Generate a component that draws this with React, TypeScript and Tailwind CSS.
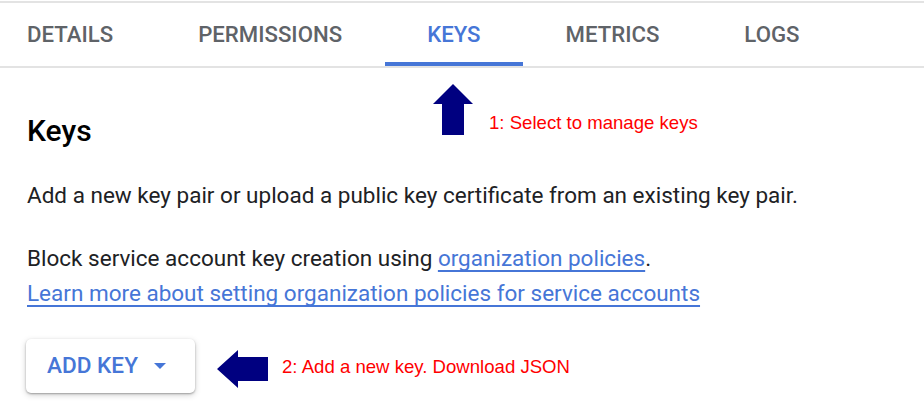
const TABS = ["DETAILS", "PERMISSIONS", "KEYS", "METRICS", "LOGS"];

function Tabs({ active }: { active: string }) {
  return (
    <div className="pt-px">
      <div className="border-t-2 border-b-2 border-[#e3e3e3] overflow-hidden">
        <div className="flex -ml-[15.5px]">
          {TABS.map((t) => (
            <div
              key={t}
              className={
                "px-[42.5px] pt-[18px] pb-[14px] border-b-4 text-[22.2px] leading-[27px] font-medium whitespace-nowrap " +
                (t === active ? "border-[#4676d7] text-[#4676d7]" : "border-transparent text-[#5f6368]")
              }
            >
              {t}
            </div>
          ))}
        </div>
      </div>
    </div>
  );
}

function UpArrow() {
  return (
    <svg width="40" height="51" viewBox="0 0 40 51">
      <path d="M20 0 L40 20 L31 20 L31 51 L9 51 L9 20 L0 20 Z" fill="#000080" />
    </svg>
  );
}

function LeftArrow() {
  return (
    <svg width="51" height="38" viewBox="0 0 51 38">
      <path d="M0 19 L21 0 L21 7 L51 7 L51 31 L21 31 L21 38 Z" fill="#000080" />
    </svg>
  );
}

const note = "text-[18.6px] leading-[18px] text-[#ff0000] font-['Liberation_Sans',Arial,sans-serif] whitespace-nowrap";
const link = "text-[#4676d7] underline decoration-2 underline-offset-[4px] [text-decoration-skip-ink:none]";

export default function App() {
  return (
    <div className="w-[924px] h-[415px] bg-white overflow-hidden font-['Roboto',sans-serif] text-[#202124]">
      <Tabs active="KEYS" />

      <div className="pl-[27px]">
        {/* heading with the first note hanging over it */}
        <div className="relative">
          <h2 className="mt-[45px] text-[30px] leading-[36px] font-medium text-black">Keys</h2>
          <div className="absolute left-[406px] -top-[29px] flex items-start gap-[16px]">
            <UpArrow />
            <span className={"mt-[30px] " + note}>1: Select to manage keys</span>
          </div>
        </div>

        <p className="mt-[29px] text-[22.5px] leading-[35px]">
          Add a new key pair or upload a public key certificate from an existing key pair.
        </p>

        <div className="mt-[28px] text-[22.5px] leading-[35px]">
          <p>
            Block service account key creation using <a className={link}>organization policies</a>.
          </p>
          <p>
            <a className={link}>Learn more about setting organization policies for service accounts</a>
          </p>
        </div>

        <div className="mt-[28px] flex items-center">
          <button className="-ml-px flex items-center h-[54px] w-[169px] pl-[21px] rounded-[5px] bg-white shadow-[0_1px_2px_rgba(0,0,0,0.3),0_2px_6px_rgba(0,0,0,0.18)]">
            <span className="text-[22.6px] leading-[26px] font-medium text-[#4676d7]">ADD KEY</span>
            <svg width="12" height="6" viewBox="0 0 12 6" className="ml-[16px]">
              <path d="M0 0 L12 0 L6 6 Z" fill="#4676d7" />
            </svg>
          </button>
          <div className="ml-[22px] mt-[6px]">
            <LeftArrow />
          </div>
          <span className={"ml-[14px] mt-[1px] " + note}>2: Add a new key. Download JSON</span>
        </div>
      </div>
    </div>
  );
}
